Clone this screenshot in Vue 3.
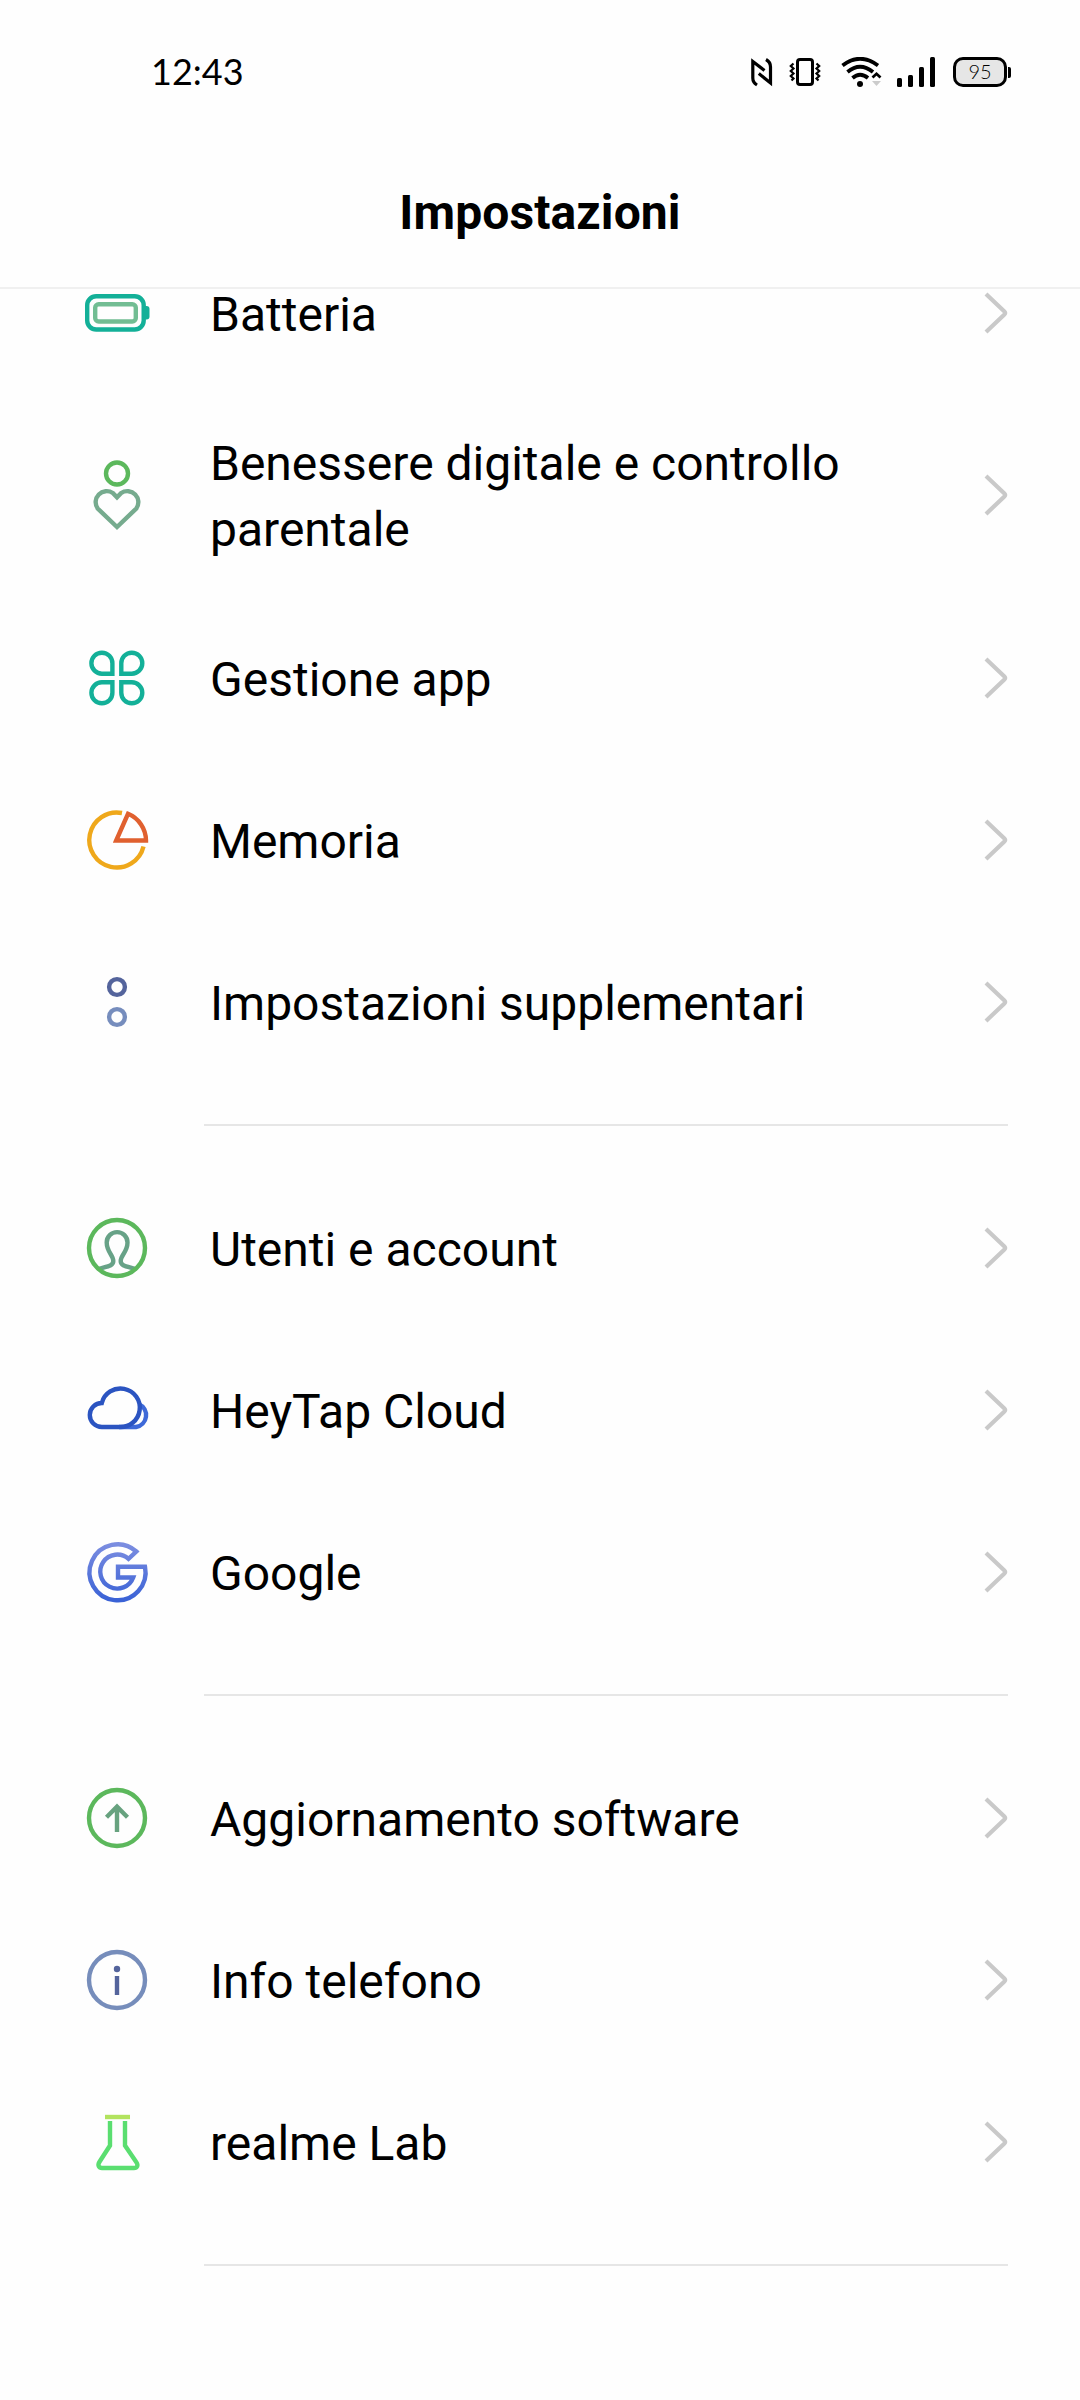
<script setup>
const green = '#5cb85c'
const sage = '#76ab8e'
const teal = '#13b098'

// every icon is a list of svg shapes on a 72x72 canvas
const icons = {
    battery: [
        { tag: 'rect', x: 6.2, y: 19.2, width: 56.5, height: 33.3, rx: 9, stroke: teal },
        { tag: 'path', d: 'M64 29 h1.5 q3 0 3 3 v7.5 q0 3 -3 3 h-1.5 z', fill: teal },
        { tag: 'rect', x: 14.2, y: 27.2, width: 40.6, height: 17.3, rx: 3.5, stroke: '#72bd93' },
    ],
    wellbeing: [
        { tag: 'circle', cx: 36, cy: 14.5, r: 11, stroke: green },
        { tag: 'path', d: 'M36 68 L16.7 49.5 A11 11 0 0 1 31.8 34 L36 38.3 L40.2 34 A11 11 0 0 1 55.3 49.5 Z', stroke: sage },
    ],
    apps: [
        { tag: 'path', d: 'M31.4 31.7 H21 A10.5 10.5 0 1 1 31.4 21.3 Z', stroke: teal },
        { tag: 'path', d: 'M40.3 31.7 H50.7 A10.5 10.5 0 1 0 40.3 21.3 Z', stroke: teal },
        { tag: 'path', d: 'M31.4 40.3 H21 A10.5 10.5 0 1 0 31.4 50.7 Z', stroke: teal },
        { tag: 'path', d: 'M40.3 40.3 H50.7 A10.5 10.5 0 1 1 40.3 50.7 Z', stroke: teal },
    ],
    memory: [
        { tag: 'path', d: 'M41 9 A27.5 27.5 0 1 0 62.5 42.5', stroke: '#efa81b' },
        { tag: 'path', d: 'M35.2 36.5 L47 9.8 A29 29 0 0 1 65 36.5 Z', stroke: '#e0602f' },
    ],
    extra: [
        { tag: 'circle', cx: 36, cy: 21, r: 7.9, stroke: '#54649c' },
        { tag: 'circle', cx: 36, cy: 51, r: 7.9, stroke: '#768dbd' },
    ],
    user: [
        { tag: 'path', d: 'M18 56.8 C27 54.3 32.3 54 32.3 49 C32.3 43 25.7 40 25.7 30.5 A10.4 10.4 0 0 1 46.5 30.5 C46.5 40 39.7 43 39.7 49 C39.7 54 45 54.3 54 56.8', stroke: '#67a287' },
        { tag: 'circle', cx: 36, cy: 36, r: 28, stroke: green },
    ],
    cloud: [
        { tag: 'path', d: 'M58 30.2 A12 12 0 0 1 55 53 H38', stroke: '#3e69d8' },
        { tag: 'path', d: 'M20.8 29 A19.3 19.3 0 1 1 38 53 H20.8 A12 12 0 1 1 20.8 29 Z', stroke: '#2b54c1' },
    ],
    google: [
        { tag: 'path', d: 'M55.3 15.5 A28 28 0 1 0 64 30.8 H37 V41.5 H52.2 A17 17 0 1 1 47.5 22.8 Z', stroke: 'url(#googleBlue)' },
    ],
    update: [
        { tag: 'circle', cx: 36, cy: 36, r: 28, stroke: green },
        { tag: 'path', d: 'M36 50 V24.5 M25.5 35.2 L36 24.7 L46.5 35.2', stroke: '#67a27f' },
    ],
    info: [
        { tag: 'circle', cx: 36, cy: 36, r: 28, stroke: '#768dbb' },
        { tag: 'circle', cx: 36, cy: 25, r: 3.2, fill: '#54649c' },
        { tag: 'path', d: 'M36 32 V51', stroke: '#54649c' },
    ],
    lab: [
        { tag: 'path', d: 'M24 11 H49', stroke: '#b2e35f' },
        { tag: 'path', d: 'M29 15 V39.5 L18.4 56 C16.3 59.5 18 62 21 62 H53 C56 62 57.7 59.5 55.2 56 L44 39.5 V15', stroke: '#5ade70' },
    ],
}

const groups = [
    [
        { icon: 'battery', label: 'Batteria' },
        { icon: 'wellbeing', label: 'Benessere digitale e controllo parentale' },
        { icon: 'apps', label: 'Gestione app' },
        { icon: 'memory', label: 'Memoria' },
        { icon: 'extra', label: 'Impostazioni supplementari' },
    ],
    [
        { icon: 'user', label: 'Utenti e account' },
        { icon: 'cloud', label: 'HeyTap Cloud' },
        { icon: 'google', label: 'Google' },
    ],
    [
        { icon: 'update', label: 'Aggiornamento software' },
        { icon: 'info', label: 'Info telefono' },
        { icon: 'lab', label: 'realme Lab' },
    ],
]
</script>

<template>
    <div class="screen">
        <div class="status-bar">
            <span class="clock">12:43</span>
            <div class="status-icons">
                <svg class="nfc" width="22" height="30" viewBox="0 0 22 30" fill="none" stroke="#000" stroke-width="3.2">
                    <path d="M6 28 Q1.8 25.5 1.8 21 V4.5 L13.5 13.5" />
                    <path d="M15 2.5 Q19.5 5 19.5 10 V26 L7.8 16.5" />
                </svg>
                <svg class="vibrate" width="32" height="30" viewBox="0 0 32 30" fill="none" stroke="#000">
                    <rect x="8.5" y="2.5" width="15" height="25" rx="2.5" stroke-width="3" />
                    <path d="M4.5 6.5 L1.8 9 L4.5 11.5 L1.8 14 L4.5 16.5 L1.8 19 L4.5 21.5 L2.5 23.5" stroke-width="2.2" />
                    <path d="M27.5 6.5 L30.2 9 L27.5 11.5 L30.2 14 L27.5 16.5 L30.2 19 L27.5 21.5 L29.5 23.5" stroke-width="2.2" />
                </svg>
                <svg class="wifi" width="42" height="30" viewBox="0 0 42 30" fill="none" stroke="#000" stroke-width="3.8">
                    <path d="M1.5 8.5 Q19 -5 37 8.5" />
                    <path d="M6.5 15 Q19 4.5 32 15" />
                    <path d="M11.5 21 Q19 14.5 27 21" />
                    <circle cx="19" cy="27" r="3" fill="#000" stroke="none" />
                    <path d="M31.5 20.5 L35.5 16.8 L39.5 20.5" stroke-width="2.8" />
                    <path d="M31 24 H40 L35.5 29 Z" fill="#ccc" stroke="none" />
                </svg>
                <svg class="signal" width="39" height="30" viewBox="0 0 39 30">
                    <rect x="0" y="21" width="5" height="9" rx="1.5" />
                    <rect x="11" y="18" width="5" height="12" rx="1.5" />
                    <rect x="22" y="10" width="5" height="20" rx="1.5" />
                    <rect x="33" y="0" width="5" height="30" rx="1.5" />
                </svg>
                <div class="charge"><span>95</span></div>
                <div class="charge-tip"></div>
            </div>
        </div>

        <div class="title-bar">
            <h1>Impostazioni</h1>
        </div>

        <div class="list">
            <div v-for="(group, i) in groups" :key="i" class="group">
                <div v-for="item in group" :key="item.icon" class="row">
                    <svg class="icon" width="72" height="72" viewBox="0 0 72 72" fill="none" stroke-width="4.4">
                        <defs v-if="item.icon == 'google'">
                            <linearGradient id="googleBlue" x1="0" y1="0" x2="0" y2="1">
                                <stop offset="0" stop-color="#7b8de0" />
                                <stop offset="1" stop-color="#3a62d6" />
                            </linearGradient>
                        </defs>
                        <component :is="tag" v-for="({ tag, ...attrs }, n) in icons[item.icon]" :key="n" v-bind="attrs" />
                    </svg>
                    <span class="label">{{ item.label }}</span>
                    <svg class="chevron" width="24" height="42" viewBox="0 0 24 42" fill="none" stroke="#c9c9c9" stroke-width="4.2">
                        <path d="M2 2 L20.4 19.6 Q21.8 21 20.4 22.4 L2 40" />
                    </svg>
                </div>
                <div class="divider"></div>
            </div>
        </div>
    </div>
</template>

<style>
body {
    background: #fefefe;
}
</style>

<style scoped>
.screen {
    width: 1080px;
    height: 2400px;
    overflow: hidden;
    background: #fefefe;
    color: #000;
    font-family: Roboto, "Liberation Sans", sans-serif;
}

.status-bar {
    display: flex;
    align-items: center;
    justify-content: space-between;
    box-sizing: border-box;
    height: 144px;
    padding: 0 69px 0 151px;
}

.clock {
    padding-bottom: 2px;
    font-family: Lato, sans-serif;
    font-size: 36px;
    line-height: 44px;
}

.status-icons {
    display: flex;
    align-items: center;
}

.vibrate {
    margin-left: 16px;
}

.wifi {
    margin-left: 20px;
}

.signal {
    margin-left: 14px;
}

.charge {
    display: flex;
    align-items: center;
    justify-content: center;
    box-sizing: border-box;
    width: 54px;
    height: 30px;
    margin-left: 17px;
    padding-bottom: 2px;
    border: 3px solid #000;
    border-radius: 10px;
    background: #e6e6e6;
    font-family: Lato, sans-serif;
    font-size: 20px;
    font-weight: 300;
    line-height: 22px;
}

.charge-tip {
    width: 3px;
    height: 11px;
    margin-left: 1px;
    border-radius: 0 2px 2px 0;
    background: #000;
}

.title-bar {
    display: flex;
    align-items: center;
    justify-content: center;
    box-sizing: border-box;
    height: 145px;
    padding-bottom: 5px;
    border-bottom: 2px solid #f0f0f0;
}

h1 {
    margin: 0;
    font-size: 48px;
    font-weight: 700;
    letter-spacing: 0.1px;
    line-height: 60px;
}

/* the list is scrolled a little under the title bar */
.list {
    display: flow-root;
    margin-top: -57px;
}

.row {
    display: flex;
    align-items: center;
    box-sizing: border-box;
    min-height: 162px;
    padding: 33px 72px 34px 81px;
}

.icon {
    flex: none;
}

.label {
    flex: 1;
    margin: 0 99px 0 57px;
    padding-top: 4px;
    font-size: 48px;
    line-height: 66px;
}

.chevron {
    flex: none;
}

.divider {
    height: 2px;
    margin: 41px 72px 41px 204px;
    background: #e6e6e6;
}
</style>
